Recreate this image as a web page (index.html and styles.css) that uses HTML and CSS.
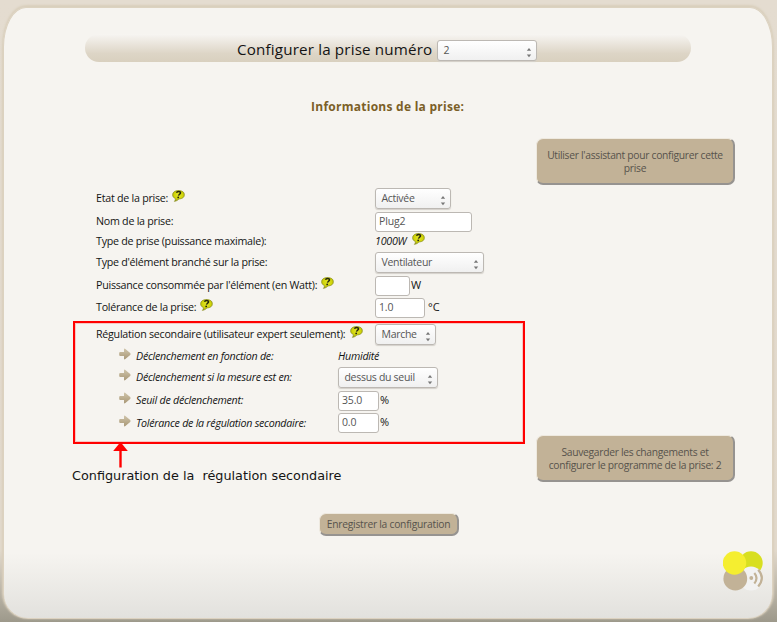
FILE: index.html
```html
<!DOCTYPE html>
<html lang="fr">
<head>
<meta charset="utf-8">
<title>Configurer la prise</title>
<link rel="stylesheet" href="styles.css">
</head>
<body>
<svg class="defs" aria-hidden="true">
  <defs>
    <linearGradient id="sand" x1="0" y1="0" x2="0" y2="1"><stop offset="0" stop-color="#cfc4aa"/><stop offset="1" stop-color="#a99876"/></linearGradient>
    <radialGradient id="lime" cx=".5" cy=".4" r=".6"><stop offset="0" stop-color="#e3e62c"/><stop offset=".65" stop-color="#cfd306"/><stop offset="1" stop-color="#8c9216"/></radialGradient>
    <symbol id="help" viewBox="0 0 13 12">
      <path d="M6.500.6C10 .6 12.400 2 12.400 4.700S10.400 8.800 7 9C6 10 4.200 11.200 2.400 11.400C3.100 10.500 3.500 9.600 3.300 8.500C1.500 7.800.6 6.500.6 4.800C.6 2.100 3 .6 6.500.6Z" fill="url(#lime)" stroke="#8f9426" stroke-width=".7"/>
      <path d="M4.500 2.700C5.100 .9 8.600 1.100 8.500 2.900C8.400 4.300 6.700 4.200 6.500 5.700" fill="none" stroke="#25260d" stroke-width="1.500"/>
      <circle cx="6.200" cy="7.400" r=".9" fill="#25260d"/>
    </symbol>
    <symbol id="arrow" viewBox="0 0 12 12">
      <path d="M1.300 3.900H5V1.600Q5 .1 6.400 .9L11.200 5.100Q11.900 6 11.200 6.900L6.400 11.100Q5 11.900 5 10.400V8.100H1.300Q.2 8.100.2 7V5Q.2 3.900 1.300 3.900Z" fill="url(#sand)"/>
    </symbol>
    <symbol id="spin" viewBox="0 0 6 11">
      <path d="M.8 3.700L3 .9L5.200 3.700ZM.8 7.600H5.200L3 10.300Z" fill="#777"/>
    </symbol>
  </defs>
</svg>
<main class="panel">
  <header class="title"><span class="title-text">Configurer la prise numéro</span><div class="select w-num">2<svg class="spin"><use href="#spin"/></svg></div></header>
  <h1 class="heading">Informations de la prise:</h1>
  <div class="content">
    <form class="form">
      <div class="row r24"><label>Etat de la prise:</label><svg class="help"><use href="#help"/></svg><div class="value"><div class="select w-state">Activée<svg class="spin"><use href="#spin"/></svg></div></div></div>
      <div class="row r21"><label>Nom de la prise:</label><div class="value"><div class="input w-name">Plug2</div></div></div>
      <div class="row r19"><label>Type de prise (puissance maximale):</label><div class="value"><em>1000W</em><svg class="help"><use href="#help"/></svg></div></div>
      <div class="row r23"><label>Type d'élément branché sur la prise:</label><div class="value"><div class="select w-type">Ventilateur<svg class="spin"><use href="#spin"/></svg></div></div></div>
      <div class="row r23"><label>Puissance consommée par l'élément (en Watt):</label><svg class="help"><use href="#help"/></svg><div class="value"><div class="input w-watt"></div><span class="unit">W</span></div></div>
      <div class="row r21"><label>Tolérance de la prise:</label><svg class="help"><use href="#help"/></svg><div class="value"><div class="input w-tol">1.0</div><span class="unit deg">°C</span></div></div>
      <div class="row regulation"><label>Régulation secondaire (utilisateur expert seulement):</label><svg class="help"><use href="#help"/></svg><div class="value"><div class="select w-reg">Marche<svg class="spin"><use href="#spin"/></svg></div></div></div>
      <div class="sub">
        <div class="row r20"><svg class="arrow"><use href="#arrow"/></svg><label>Déclenchement en fonction de:</label><div class="value"><em>Humidité</em></div></div>
        <div class="row r23"><svg class="arrow"><use href="#arrow"/></svg><label>Déclenchement si la mesure est en:</label><div class="value"><div class="select w-over">dessus du seuil<svg class="spin"><use href="#spin"/></svg></div></div></div>
        <div class="row r23"><svg class="arrow"><use href="#arrow"/></svg><label>Seuil de déclenchement:</label><div class="value"><div class="input w-pct">35.0</div><span class="unit">%</span></div></div>
        <div class="row r22"><svg class="arrow"><use href="#arrow"/></svg><label>Tolérance de la régulation secondaire:</label><div class="value"><div class="input w-pct">0.0</div><span class="unit">%</span></div></div>
      </div>
    </form>
    <aside class="actions">
      <div class="button large">Utiliser l'assistant pour configurer cette<br>prise</div>
      <div class="button large">Sauvegarder les changements et<br>configurer le programme de la prise: 2</div>
    </aside>
  </div>
  <div class="button save">Enregistrer la configuration</div>
</main>
<svg class="logo" viewBox="0 0 40 40">
  <circle cx="28" cy="12" r="11.700" fill="#d8df20"/>
  <circle cx="28" cy="27.500" r="12" fill="#f2f2f2"/>
  <circle cx="12.300" cy="27.700" r="11.900" fill="#c2b297"/>
  <circle cx="11.500" cy="12" r="11.700" fill="#f5ee30"/>
  <g fill="none" stroke="#c2b297" stroke-width="2.200"><path d="M31.300 22Q35.700 27 31.300 32.500M35.200 18.800Q42.500 27 35.200 35.500"/></g>
  <circle cx="28.300" cy="27" r="1.900" fill="#c2b297"/>
</svg>
<div class="callout"></div>
<svg class="pointer" viewBox="0 0 15 26"><path d="M7.500 0L14.800 9H.2Z" fill="#f00"/><path d="M7.500 7V25.500" stroke="#f00" stroke-width="2.400"/></svg>
<div class="note">Configuration de la&nbsp; régulation secondaire</div>
</body>
</html>
```
FILE: styles.css
```css
* { box-sizing: border-box; }
body {
  margin: 0;
  padding: 7px 4px 3px 3px;
  width: 777px;
  height: 622px;
  overflow: hidden;
  background: linear-gradient(#e4dcd0 0, #e2d9cc 550px, #9d998b 622px);
  font: 10.700px/15px "Open Sans", sans-serif;
  letter-spacing: -.26px;
  color: #141414;
}
.defs { position: absolute; width: 0; height: 0; }
.panel {
  height: 612px;
  border: 1px solid #dcd2c0;
  border-radius: 23px 23px 25px 25px / 40px 40px 25px 25px;
  background: linear-gradient(#f6f4f0 545px, #e2e1dd 611px);
  box-shadow: 0 -1px 2px 1px #d9cfbc;
  display: flex;
  flex-direction: column;
}
.title {
  margin: 26px 0 0 81px;
  width: 606px;
  height: 28px;
  flex: none;
  border-radius: 14px;
  background: linear-gradient(#f7f5f2, #ddd5c6 70%, #d9d0bf);
  display: flex;
  align-items: center;
  padding: 4px 0 0 152px;
}
.title-text { width: 200px; margin-top: -3px; font-size: 15.200px; line-height: 20px; white-space: nowrap; letter-spacing: .16px; }
.heading { margin: 36px 0 0 307px; font-size: 12px; line-height: 18px; letter-spacing: .26px; font-weight: 700; color: #7b5f27; white-space: nowrap; }
.content { display: flex; margin: 22px 0 0 92px; height: 344px; flex: none; }
.form { width: 440px; padding-top: 48px; }
.row { display: flex; align-items: center; white-space: nowrap; position: relative; }
.row > .value { display: flex; align-items: center; position: absolute; left: 279px; }
.r19 { height: 19px; }
.r20 { height: 20px; }
.r21 { height: 21px; }
.r22 { height: 22px; }
.r23 { height: 23px; }
.r24 { height: 24px; margin-bottom: 1px; }
.regulation { height: 23px; margin-top: 5px; }
.sub { padding-left: 23px; font-style: italic; }
.sub .row > .value { left: 219px; }
.help { width: 13px; height: 12px; flex: none; margin: -5px 0 0 4px; }
.regulation .help { margin-left: 5px; }
.value .help { margin-left: 6px; }
.arrow { width: 12px; height: 12px; flex: none; margin: -5px 5px 0 0; }
.select, .input {
  height: 20px;
  border: 1px solid #bcb8b3;
  border-radius: 3px;
  background: #fff;
  color: #555;
  font-size: 10.500px;
  line-height: 17px;
  padding-left: 3px;
  font-style: normal;
  white-space: nowrap;
  letter-spacing: -.3px;
}
.input { letter-spacing: -.15px; }
.select {
  height: 21px;
  background: linear-gradient(#fff, #f0f0f0);
  padding-left: 5.500px;
  line-height: 18px;
  display: flex;
  justify-content: space-between;
  box-shadow: 0 1px 1px #d4d0ca;
}
.spin { width: 6px; height: 11px; flex: none; margin: 6px 4px 0 0; }
.w-num { width: 100px; }
.w-state { width: 76px; }
.w-name { width: 97px; }
.w-type { width: 109px; }
.w-watt { width: 35px; }
.w-tol { width: 50px; }
.w-reg { width: 61px; }
.w-over { width: 100px; }
.w-pct { width: 41px; }
.unit { font-size: 11px; font-style: normal; margin: -3px 0 0 1px; }
.deg { margin-left: 3px; letter-spacing: 0; }
.actions { width: 199px; display: flex; flex-direction: column; justify-content: space-between; }
.button {
  border: solid;
  border-width: 1px 2px 2px 1px;
  border-color: #eee9df #969390 #969390 #eee9df;
  border-radius: 7px;
  background: #c2b297;
  color: #57534c;
  text-align: center;
  font-size: 10.300px;
  line-height: 13px;
  white-space: nowrap;
}
.large { height: 47px; padding-top: 10px; letter-spacing: -.3px; }
.save { width: 140px; height: 23px; margin: 31px 0 0 315px; padding-top: 4px; }
.logo { position: absolute; left: 723px; top: 551px; width: 40px; height: 40px; }
.callout { position: absolute; left: 73px; top: 321px; width: 452px; height: 123px; border: 2px solid #f00; box-shadow: inset 0 0 0 1px #ff000030; }
.pointer { position: absolute; left: 113px; top: 442px; width: 15px; height: 26px; }
.note { position: absolute; left: 72px; top: 468px; font: 12.800px/16px "DejaVu Sans", sans-serif; letter-spacing: 0; white-space: nowrap; }
```
